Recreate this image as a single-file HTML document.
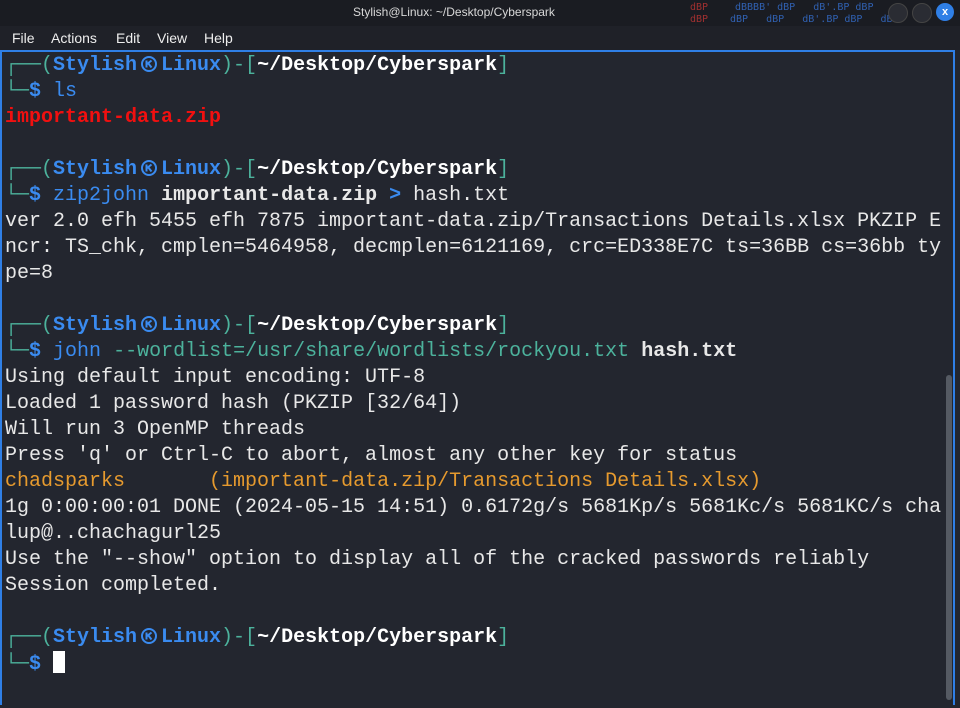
<!DOCTYPE html>
<html><head><meta charset="utf-8"><style>
body{margin:0;width:960px;height:708px;background:#23262f;overflow:hidden;font-family:"Liberation Mono",monospace;}
#title{position:absolute;left:0;top:0;width:960px;height:26px;background:#1a1c22;color:#d8d8d8;font:12px "Liberation Sans",sans-serif;}
#title .t{position:absolute;left:353px;top:5px;}
#menu{position:absolute;left:0;top:26px;width:960px;height:24px;background:#1f2128;color:#eee;font:14px "Liberation Sans",sans-serif;}
#menu span{position:absolute;top:4px;}
#term{position:absolute;left:0;top:50px;width:955px;height:655px;border:2px solid #2f7fe6;border-bottom:none;box-sizing:border-box;}
#t{position:absolute;left:5px;top:53px;font-size:20px;color:#e8e8e8;font-family:"Liberation Mono","DejaVu Sans Mono",monospace;}
#t div{height:26px;line-height:26px;white-space:pre;overflow:hidden;}
.g{color:#4cb29c}.b{color:#3a8bf0;font-weight:bold}.w{color:#fff;font-weight:bold}.r{color:#f01010;font-weight:bold}.o{color:#e69a2e}.c{color:#4cb29c}.bl{color:#3a8bf0}
svg.k{width:24px;height:16px;vertical-align:-2px;}
#sb{position:absolute;left:946px;top:375px;width:6px;height:325px;background:#555a63;border-radius:3px;}
.cur{display:inline-block;width:12px;height:22px;background:#fff;vertical-align:-4px;}
.btn{position:absolute;top:3px;width:18px;height:18px;border-radius:50%;}
</style></head><body>
<div id="title"><span class="t">Stylish@Linux: ~/Desktop/Cyberspark</span>
<span style="position:absolute;left:690px;top:2px;color:#a03030;font:10px monospace">dBP</span>
<span style="position:absolute;left:735px;top:2px;color:#3060b0;font:10px monospace">dBBBB' dBP &nbsp; dB'.BP dBP</span>
<span style="position:absolute;left:690px;top:14px;color:#a03030;font:10px monospace">dBP</span>
<span style="position:absolute;left:730px;top:14px;color:#3060b0;font:10px monospace">dBP &nbsp; dBP &nbsp; dB'.BP dBP &nbsp; dBP</span>
<div class="btn" style="left:888px;background:#2a2c33;border:1px solid #444"></div>
<div class="btn" style="left:912px;background:#2a2c33;border:1px solid #444"></div>
<div class="btn" style="left:936px;background:#2f7fe6;color:#fff;font:bold 11px sans-serif;text-align:center;line-height:18px">x</div>
</div>
<div id="menu"><span style="left:12px">File</span><span style="left:51px">Actions</span><span style="left:116px">Edit</span><span style="left:157px">View</span><span style="left:204px">Help</span></div>
<div id="term"></div>
<div id="sb"></div>
<div id="t"><div><span class="g">┌──(</span><span class="b">Stylish<svg class="k" viewBox="0 0 24 16"><circle cx="12" cy="8" r="7" fill="none" stroke="#3a8bf0" stroke-width="2"/><path d="M9.5 4.5v7M9.5 8.5L14.5 4.5M11 7L14.5 11.5" stroke="#3a8bf0" stroke-width="2" fill="none"/></svg>Linux</span><span class="g">)-[</span><span class="w">~/Desktop/Cyberspark</span><span class="g">]</span></div><div><span class="g">└─</span><span class="b">$</span> <span class="bl">ls</span></div><div><span class="r">important-data.zip</span></div><div></div><div><span class="g">┌──(</span><span class="b">Stylish<svg class="k" viewBox="0 0 24 16"><circle cx="12" cy="8" r="7" fill="none" stroke="#3a8bf0" stroke-width="2"/><path d="M9.5 4.5v7M9.5 8.5L14.5 4.5M11 7L14.5 11.5" stroke="#3a8bf0" stroke-width="2" fill="none"/></svg>Linux</span><span class="g">)-[</span><span class="w">~/Desktop/Cyberspark</span><span class="g">]</span></div><div><span class="g">└─</span><span class="b">$</span> <span class="bl">zip2john</span> <b>important-data.zip</b> <span class="bl" style="font-weight:bold">&gt;</span> hash.txt</div><div>ver 2.0 efh 5455 efh 7875 important-data.zip/Transactions Details.xlsx PKZIP E</div><div>ncr: TS_chk, cmplen=5464958, decmplen=6121169, crc=ED338E7C ts=36BB cs=36bb ty</div><div>pe=8</div><div></div><div><span class="g">┌──(</span><span class="b">Stylish<svg class="k" viewBox="0 0 24 16"><circle cx="12" cy="8" r="7" fill="none" stroke="#3a8bf0" stroke-width="2"/><path d="M9.5 4.5v7M9.5 8.5L14.5 4.5M11 7L14.5 11.5" stroke="#3a8bf0" stroke-width="2" fill="none"/></svg>Linux</span><span class="g">)-[</span><span class="w">~/Desktop/Cyberspark</span><span class="g">]</span></div><div><span class="g">└─</span><span class="b">$</span> <span class="bl">john</span> <span class="c">--wordlist=/usr/share/wordlists/rockyou.txt</span> <b>hash.txt</b></div><div>Using default input encoding: UTF-8</div><div>Loaded 1 password hash (PKZIP [32/64])</div><div>Will run 3 OpenMP threads</div><div>Press 'q' or Ctrl-C to abort, almost any other key for status</div><div><span class="o">chadsparks</span>       <span class="o">(important-data.zip/Transactions Details.xlsx)</span></div><div>1g 0:00:00:01 DONE (2024-05-15 14:51) 0.6172g/s 5681Kp/s 5681Kc/s 5681KC/s cha</div><div>lup@..chachagurl25</div><div>Use the "--show" option to display all of the cracked passwords reliably</div><div>Session completed.</div><div></div><div><span class="g">┌──(</span><span class="b">Stylish<svg class="k" viewBox="0 0 24 16"><circle cx="12" cy="8" r="7" fill="none" stroke="#3a8bf0" stroke-width="2"/><path d="M9.5 4.5v7M9.5 8.5L14.5 4.5M11 7L14.5 11.5" stroke="#3a8bf0" stroke-width="2" fill="none"/></svg>Linux</span><span class="g">)-[</span><span class="w">~/Desktop/Cyberspark</span><span class="g">]</span></div><div><span class="g">└─</span><span class="b">$</span> <span class="cur"></span></div></div>
</body></html>
